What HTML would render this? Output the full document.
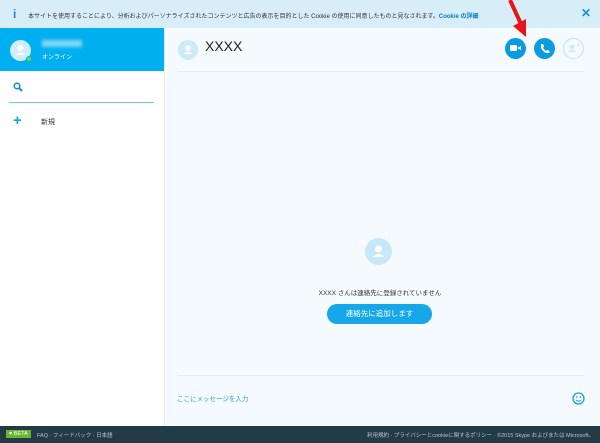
<!DOCTYPE html>
<html><head><meta charset="utf-8"><style>
*{margin:0;padding:0;box-sizing:border-box}
body{width:600px;height:443px;overflow:hidden;font-family:"Liberation Sans","Noto Sans CJK JP",sans-serif;background:#f4fafd;position:relative}
.ban{position:absolute;left:0;top:0;width:600px;height:28px;background:#d7eef9;font-size:6px;color:#333;}
.side{position:absolute;left:0;top:28px;width:165px;height:398px;background:#fff;border-right:1px solid #e4eef3}
.prof{height:43px;background:#00aff0;position:relative}
.foot{position:absolute;left:0;top:426px;width:600px;height:17px;background:#233a47;color:#b8c6cc;font-size:5.5px}
.ab{position:absolute}
.circ{position:absolute;border-radius:50%}
</style></head><body>
<div class="ban">
<div class="ab" style="left:13px;top:7px;color:#1a8fd0;font-weight:bold;font-size:12px">i</div>
<div class="ab" style="left:28px;top:11px;white-space:nowrap">本サイトを使用することにより、分析およびパーソナライズされたコンテンツと広告の表示を目的とした Cookie の使用に同意したものと見なされます。<span style="color:#0a7cc0;font-weight:bold">Cookie の詳細</span></div>
<div class="ab" style="left:581px;top:6px;color:#1a8fd0;font-weight:bold;font-size:12px">✕</div>
</div>
<div class="side">
<div class="prof">
<svg class="ab" style="left:10px;top:12px" width="21" height="21"><circle cx="10.5" cy="10.5" r="10.5" fill="#cfeefb"/><circle cx="10.5" cy="8" r="3" fill="#fff"/><path d="M5.5 15 Q10.5 10 15.5 15 Z" fill="#fff"/></svg>
<div class="circ" style="left:26px;top:28px;width:6px;height:6px;background:#6fd33a;border:1px solid #00aff0"></div>
<div class="ab" style="left:42px;top:12px;width:40px;height:7px;background:#7fd5f5;filter:blur(1.5px)"></div>
<div class="ab" style="left:42px;top:24px;font-size:6px;color:#fff">オンライン</div>
</div>
<svg class="ab" style="left:13px;top:54px" width="10" height="10"><circle cx="4" cy="4" r="2.8" fill="none" stroke="#1a8fd0" stroke-width="1.6"/><path d="M6 6 L9 9" stroke="#1a8fd0" stroke-width="2"/></svg>
<div class="ab" style="left:9px;top:74px;width:145px;height:1px;background:#6dc8ea"></div>
<div class="ab" style="left:13px;top:84px;color:#1a9fdc;font-size:15px;font-weight:bold">+</div>
<div class="ab" style="left:41px;top:89px;font-size:7px;color:#333">新規</div>
</div>
<svg class="ab" style="left:178px;top:40px" width="20" height="20"><circle cx="10" cy="10" r="10" fill="#cdeaf8"/><circle cx="10" cy="8" r="2.8" fill="#fff"/><path d="M5.5 14 Q10 9.5 14.5 14 Z" fill="#fff"/></svg>
<div class="ab" style="left:205px;top:38px;font-size:14px;color:#222">XXXX</div>
<div class="circ" style="left:505px;top:38px;width:21px;height:21px;background:#0a9be0"></div>
<div class="ab" style="left:510px;top:45px;width:7px;height:6px;background:#fff;border-radius:1px"></div>
<div class="ab" style="left:517px;top:46px;border-right:4px solid #fff;border-top:2px solid transparent;border-bottom:2px solid transparent"></div>
<svg class="ab" style="left:534px;top:38px" width="21" height="21"><circle cx="10.5" cy="10.5" r="10.5" fill="#0a9be0"/><path d="M7 6 L9 6 L10 8.5 L9 9.5 Q10 12 12 13 L13 12 L15.5 13 L15.5 15 Q10 16 7 10 Z" fill="#fff"/></svg>
<svg class="ab" style="left:563px;top:38px" width="21" height="21"><circle cx="10.5" cy="10.5" r="10" fill="none" stroke="#bfe3f4"/><circle cx="9" cy="9" r="2.3" fill="#cfe9f6"/><path d="M5 14 Q9 10 13 14 Z" fill="#cfe9f6"/><path d="M14 7 h3 M15.5 5.5 v3" stroke="#cfe9f6"/></svg>
<div class="ab" style="left:177px;top:71px;width:407px;height:1px;background:#e2eef4"></div>
<svg class="ab" style="left:480px;top:0" width="60" height="45"><path d="M30 0 L41 24" stroke="#e8141a" stroke-width="4"/><path d="M33 26 L46 37 L46 19 Z" fill="#e8141a"/></svg>
<svg class="ab" style="left:365px;top:238px" width="27" height="27"><circle cx="13.5" cy="13.5" r="13.5" fill="#c6e8f8"/><circle cx="13.5" cy="11" r="3.5" fill="#fff"/><path d="M7.5 19 Q13.5 13 19.5 19 Z" fill="#fff"/></svg>
<div class="ab" style="left:0;top:287px;width:760px;text-align:center;font-size:6.5px;color:#333">XXXX さんは連絡先に登録されていません</div>
<div class="ab" style="left:327px;top:304px;width:105px;height:20px;border-radius:10px;background:#16a7e8;color:#fff;font-size:7.5px;text-align:center;line-height:20px">連絡先に追加します</div>
<div class="ab" style="left:177px;top:375px;width:407px;height:1px;background:#e2eef4"></div>
<div class="ab" style="left:177px;top:393px;font-size:6.5px;color:#2a9ad0">ここにメッセージを入力</div>
<svg class="ab" style="left:572px;top:392px" width="13" height="13"><circle cx="6.5" cy="6.5" r="5.5" fill="none" stroke="#1a9fdc" stroke-width="1.3"/><circle cx="4.7" cy="5" r=".8" fill="#1a9fdc"/><circle cx="8.3" cy="5" r=".8" fill="#1a9fdc"/><path d="M4 8 Q6.5 10.5 9 8" fill="none" stroke="#1a9fdc"/></svg>
<div class="foot">
<div class="ab" style="left:6px;top:4px;background:#6ab52e;color:#fff;padding:1px 3px;font-size:5.5px">♥ BETA</div>
<div class="ab" style="left:37px;top:5px">FAQ · フィードバック · 日本語</div>
<div class="ab" style="right:6px;top:5px">利用規約 · プライバシーとcookieに関するポリシー · ©2015 Skype およびまたは Microsoft。</div>
</div>
</body></html>
